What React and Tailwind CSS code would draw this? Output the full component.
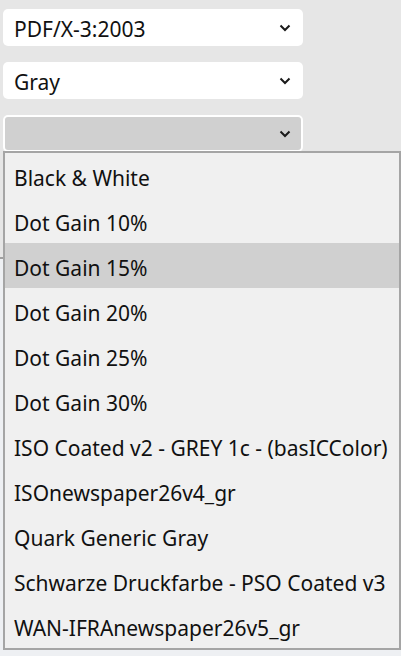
import React from 'react';

const options = [
  'Black & White',
  'Dot Gain 10%',
  'Dot Gain 15%',
  'Dot Gain 20%',
  'Dot Gain 25%',
  'Dot Gain 30%',
  'ISO Coated v2 - GREY 1c - (basICColor)',
  'ISOnewspaper26v4_gr',
  'Quark Generic Gray',
  'Schwarze Druckfarbe - PSO Coated v3',
  'WAN-IFRAnewspaper26v5_gr',
];

function Chevron() {
  return (
    <svg width="12" height="8" viewBox="0 0 12 8" className="text-[#1a1a1a]">
      <path d="M1.5 1.5 L6 6 L10.5 1.5" fill="none" stroke="currentColor" strokeWidth="2" />
    </svg>
  );
}

function Select({ value, active }) {
  return (
    <div
      className={
        active
          ? 'flex h-[37px] w-[300px] items-center justify-between rounded-[5px] border-2 border-white bg-[#d0d0d0] pl-[9px] pr-[10px]'
          : 'flex h-[37px] w-[300px] items-center justify-between rounded-[5px] bg-white pl-[11px] pr-[12px]'
      }
    >
      <span className="pt-[4px] text-[21px] leading-none text-[#111]">{value}</span>
      <Chevron />
    </div>
  );
}

export default function App() {
  return (
    <div
      className="relative h-[656px] w-[401px] overflow-hidden bg-[#eef0f3]"
      style={{ fontFamily: '"Segoe UI", "Noto Sans", sans-serif' }}
    >
      <div className="h-[259px] border-b-2 border-[#a0a0a0] bg-[#e6e6e6] pl-[3px] pt-[9px]">
        <div className="flex flex-col gap-[16px]">
          <Select value="PDF/X-3:2003" />
          <Select value="Gray" />
          <Select value="" active />
        </div>
      </div>

      <div className="absolute left-[3px] top-[151px] w-[398px] border-2 border-[#a5a5a5] bg-[#f0f0f0]">
        {options.map((o, i) => (
          <div
            key={o}
            className={
              'flex h-[45px] items-center pl-[9px] pt-[6px] text-[21px] text-[#111] ' +
              (i === 2 ? 'bg-[#d0d0d0]' : '')
            }
          >
            {o}
          </div>
        ))}
      </div>
    </div>
  );
}
